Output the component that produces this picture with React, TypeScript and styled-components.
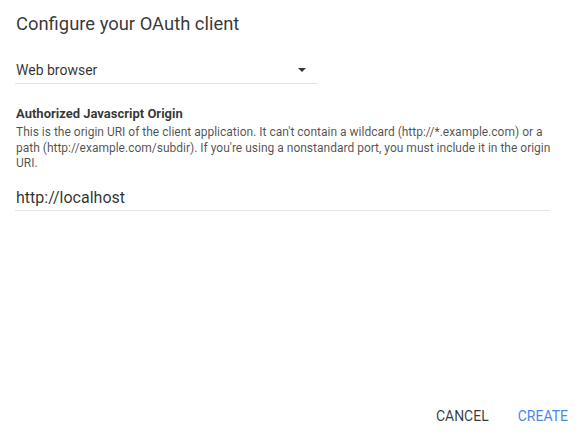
import React from "react";
import styled, { createGlobalStyle } from "styled-components";

const Global = createGlobalStyle`
  html, body { margin: 0; padding: 0; background: #fff; }
  body { font-family: Roboto, "Noto Sans", Arial, sans-serif; color: rgba(0,0,0,0.87); }
  * { box-sizing: border-box; }
`;

const Dialog = styled.div`
  width: 581px;
  height: 437px;
  display: flex;
  flex-direction: column;
  padding: 12px 15px 0 15px;
`;

const Title = styled.h2`
  margin: 0 0 0 1px;
  font-size: 18.4px;
  font-weight: 400;
  line-height: 24px;
  color: rgba(0,0,0,0.8);
`;

const Select = styled.div`
  margin-top: 21px;
  width: 303px;
  height: 27px;
  display: flex;
  align-items: center;
  justify-content: space-between;
  border-bottom: 1px solid #e4e4e4;
  padding: 1px 12px 1px 1px;
  font-size: 14px;
  color: rgba(0,0,0,0.82);
`;

const Arrow = styled.span`
  width: 0;
  height: 0;
  border-left: 4px solid transparent;
  border-right: 4px solid transparent;
  border-top: 4px solid rgba(0,0,0,0.8);
`;

const Label = styled.div`
  margin-top: 22px;
  margin-left: 1px;
  font-size: 13px;
  font-weight: 700;
  line-height: 16px;
  color: rgba(0,0,0,0.8);
`;

const Help = styled.p`
  margin: 3px 0 0 1px;
  width: 540px;
  font-size: 12px;
  line-height: 15.5px;
  color: rgba(0,0,0,0.7);
`;

const Input = styled.div`
  margin-top: 14px;
  width: 535px;
  height: 25px;
  padding: 0 0 3px 1px;
  display: flex;
  align-items: flex-end;
  font-size: 16px;
  border-bottom: 1px solid #e4e4e4;
  color: rgba(0,0,0,0.82);
`;

const Actions = styled.div`
  margin-top: auto;
  margin-right: -2px;
  display: flex;
  justify-content: flex-end;
  gap: 29px;
  padding: 0 0 13px 0;
`;

const Button = styled.button<{ $primary?: boolean }>`
  background: none;
  border: none;
  padding: 0;
  font-family: inherit;
  font-size: 14px;
  font-weight: 400;
  letter-spacing: 0;
  line-height: 16px;
  text-transform: uppercase;
  color: ${(p) => (p.$primary ? "#4a87e8" : "rgba(0,0,0,0.78)")};
`;

export default function App() {
  return (
    <>
      <Global />
      <Dialog>
        <Title>Configure your OAuth client</Title>
        <Select>
          <span>Web browser</span>
          <Arrow />
        </Select>
        <Label>Authorized Javascript Origin</Label>
        <Help>
          This is the origin URI of the client application. It can't contain a wildcard
          (http://*.example.com) or a path (http://example.com/subdir). If you're using a
          nonstandard port, you must include it in the origin URI.
        </Help>
        <Input>http://localhost</Input>
        <Actions>
          <Button>Cancel</Button>
          <Button $primary>Create</Button>
        </Actions>
      </Dialog>
    </>
  );
}
